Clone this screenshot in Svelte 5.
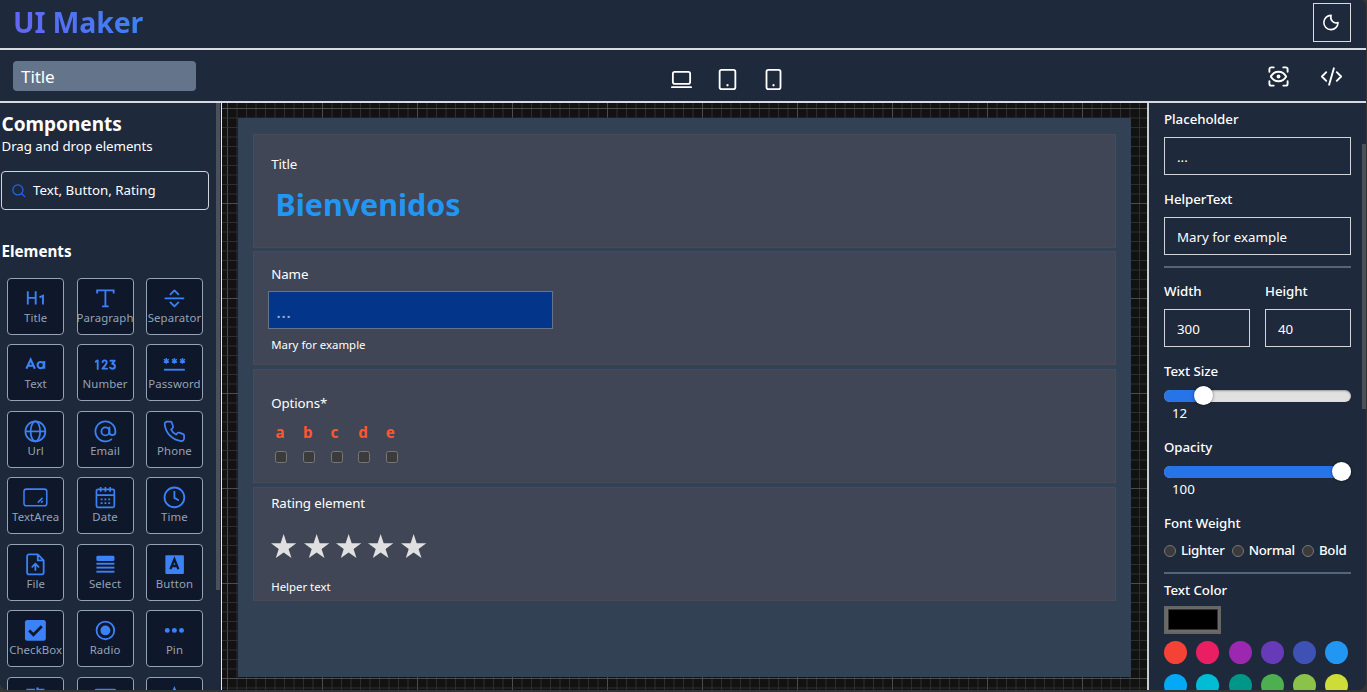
<script>
  const tiles = [
    ['Title', 'h1'], ['Paragraph', 'para'], ['Separator', 'sep'],
    ['Text', 'aa'], ['Number', 'num'], ['Password', 'pass'],
    ['Url', 'url'], ['Email', 'email'], ['Phone', 'phone'],
    ['TextArea', 'area'], ['Date', 'date'], ['Time', 'time'],
    ['File', 'file'], ['Select', 'select'], ['Button', 'button'],
    ['CheckBox', 'check'], ['Radio', 'radio'], ['Pin', 'pin'],
    ['', 'switch'], ['', 'slider'], ['', 'rating']
  ];

  const S = (d, w = 2) =>
    `<path d="${d}" fill="none" stroke="currentColor" stroke-width="${w}" stroke-linecap="round" stroke-linejoin="round"/>`;
  const F = (d) => `<path d="${d}" fill="currentColor" fill-rule="evenodd"/>`;
  const ast = (x) => `M${x} 5.200v6.200M${x - 2.700} 6.700l5.400 3.200M${x + 2.700} 6.700l-5.400 3.200`;

  const icons = {
    h1: `<path d="M4 4.500v14M12.300 4.500v14M4 11.500h8.300M16.300 11l3.700-1.800v9.300" fill="none" stroke="currentColor" stroke-width="2"/>`,
    para: `<path d="M3.300 6.800V3.500h17.400v3.300M12 3.500v17M8.500 20.500h7" fill="none" stroke="currentColor" stroke-width="1.900"/>`,
    sep: S('M2.500 12h19M7.800 7.800L12 3.600l4.200 4.200M7.800 16.200l4.200 4.200 4.200-4.200', 1.9),
    aa: `<path d="M2.500 16.600L7 6.800l4.500 9.800M4.300 13.400h5.400M21.300 8.400v8.200" fill="none" stroke="currentColor" stroke-width="2.200"/><circle cx="17.600" cy="12.700" r="3.300" fill="none" stroke="currentColor" stroke-width="2.200"/>`,
    num: S('M1.900 9.100l2-1.300v9M9 9.500c.3-2.400 4.600-2.200 4.400.4-.1 1.800-2.600 3.800-4.500 6.600h4.900M17.300 8.100h4.500l-2.700 3.300c4.300.3 3.500 5.200.3 5.200-1.200 0-2-.5-2.500-1.300', 2),
    pass: `<path d="${ast(3.500)}${ast(12)}${ast(20.500)}" fill="none" stroke="currentColor" stroke-width="1.400"/><path d="M1 17.600h22" stroke="currentColor" stroke-width="2"/>`,
    url: `<g fill="none" stroke="currentColor" stroke-width="1.800"><circle cx="12" cy="12" r="10.500"/><ellipse cx="12" cy="12" rx="5" ry="10.500"/><path d="M1.500 12h21"/></g>`,
    email: S('M16.200 7.800v5.400a3.200 3.200 0 0 0 6.300 0V12a10.500 10.500 0 1 0-4.200 8.400', 1.9) + '<circle cx="12" cy="12" r="4.200" fill="none" stroke="currentColor" stroke-width="1.900"/>',
    phone: S('M7.800 1.700H4.400a2.600 2.600 0 0 0-2.600 2.900c.9 9.200 8.200 16.700 17.500 17.600a2.600 2.600 0 0 0 2.900-2.600v-3.200a1.600 1.600 0 0 0-1-1.500l-4-1.600a1.600 1.600 0 0 0-1.700.3l-1.800 1.700c-2.200-1.100-4.100-3-5.100-5.200l1.700-1.800a1.600 1.600 0 0 0 .3-1.700L9.200 2.600a1.600 1.600 0 0 0-1.400-.9z', 1.8),
    area: `<g fill="none" stroke="currentColor"><rect x="0" y="3.300" width="24" height="17.600" rx="2.500" stroke-width="1.600"/><path d="M14.500 17.500l5-5M18 17.500l1.800-1.800" stroke-width="1.600"/></g>`,
    date: `<g fill="none" stroke="currentColor" stroke-width="1.800"><rect x="2.600" y="3.600" width="18.800" height="18.800" rx="1.500"/><path d="M3 9.500h18M7 1v5M12 1v5M17 1v5"/><path d="M7 14h2m2 0h2m2 0h2M7 18h2m2 0h2m2 0h2" stroke-width="1.800"/></g>`,
    time: `<g fill="none" stroke="currentColor" stroke-width="1.900" stroke-linecap="round"><circle cx="12" cy="12" r="10.400"/><path d="M12 6v6.500l4 2.200"/></g>`,
    file: S('M14.500 1.500H5.300A2 2 0 0 0 3.300 3.500v17a2 2 0 0 0 2 2h13.400a2 2 0 0 0 2-2V7.800zM14.500 1.500v6.300h6.200M12 18v-6.500M8.700 14.600l3.300-3.300 3.300 3.300', 1.9),
    select: '<g fill="currentColor"><rect x="2.500" y="3" width="19" height="5.500" rx="1.500"/><rect x="2.500" y="10.300" width="19" height="2"/><rect x="2.500" y="14.400" width="19" height="2"/><rect x="2.500" y="18.700" width="19" height="2"/></g>',
    button: '<rect x="2.500" y="2.500" width="19.500" height="19.500" rx="1" fill="currentColor"/><path d="M7.800 17L12 6.600 16.200 17M9.200 13.700h5.600" fill="none" stroke="#0f172a" stroke-width="2.400"/>',
    check: '<rect x="1" y="1" width="22" height="22" rx="2.500" fill="currentColor"/><path d="M5.500 12.200l4.400 4.400 8.800-9" fill="none" stroke="#0f172a" stroke-width="2.900"/>',
    radio: '<circle cx="12" cy="12" r="9.300" fill="none" stroke="currentColor" stroke-width="1.900"/><circle cx="12" cy="12" r="5.200" fill="currentColor"/>',
    pin: '<g fill="currentColor"><circle cx="4.500" cy="12" r="2.600"/><circle cx="12" cy="12" r="2.600"/><circle cx="19.500" cy="12" r="2.600"/></g>',
    switch: F('M2.500 3h9v4h-9zM13 1.500h2.500V8H13zM15.500 3h6v2.500h-6z'),
    slider: '<rect x="0" y="3" width="24" height="16" rx="3" fill="currentColor"/>',
    rating: F('M12 0l3.300 7.500 8 .7-6 5.500 1.800 8L12 18l-7.100 4.200 1.800-8-6-5.500 8-.7z')
  };

  const vlines = Array.from({ length: 98 }, (_, i) => ({ p: 5.5 + i * 9.5, major: i % 10 === 0 }));
  const hlines = Array.from({ length: 62 }, (_, i) => ({ p: 5.5 + i * 9.5, major: i % 10 === 0 }));
  const options = ['a', 'b', 'c', 'd', 'e'];
  const weights = ['Lighter', 'Normal', 'Bold'];
  const colors = ['#f44336', '#e91e63', '#9c27b0', '#673ab7', '#3f51b5', '#2196f3', '#03a9f4', '#00bcd4', '#009688', '#4caf50', '#8bc34a', '#cddc39'];
</script>

{#snippet range(label, value, pos)}
  <div class="label">{label}</div>
  <div class="range">
    <div class="fill" style="width:{pos}px"></div>
    <div class="thumb" style="left:{pos - 9.5}px"></div>
  </div>
  <div class="range-value">{value}</div>
{/snippet}

<div class="frame">
  <div class="app">
    <header>
      <h1>UI Maker</h1>
      <button class="theme" aria-label="Theme">
        <svg width="19" height="19" viewBox="0 0 24 24">{@html S('M11.500 3A7 7 0 0 0 20.300 12.100 9 9 0 1 1 11.500 3z', 2)}</svg>
      </button>
    </header>

    <div class="toolbar">
      <input class="doc-title" value="Title" aria-label="Title" />
      <div class="devices">
        <svg width="23" height="23" viewBox="0 0 24 24"><g fill="none" stroke="currentColor" stroke-width="1.900" stroke-linecap="round"><rect x="3" y="4" width="18" height="12.500" rx="2" /><path d="M2 20h20" /></g></svg>
        <svg width="23" height="23" viewBox="0 0 24 24"><rect x="3.800" y="2" width="16.400" height="20" rx="2" fill="none" stroke="currentColor" stroke-width="1.900" /><circle cx="12" cy="18" r="1.200" fill="currentColor" /></svg>
        <svg width="23" height="23" viewBox="0 0 24 24"><rect x="4.700" y="2" width="14.600" height="20" rx="2" fill="none" stroke="currentColor" stroke-width="1.900" /><circle cx="12" cy="18" r="1.200" fill="currentColor" /></svg>
      </div>
      <div class="tools">
        <svg width="23" height="23" viewBox="0 0 24 24">
          {@html S('M2.500 7V4.500a2 2 0 0 1 2-2H7M17 2.500h2.500a2 2 0 0 1 2 2V7M21.500 17v2.500a2 2 0 0 1-2 2H17M7 21.500H4.500a2 2 0 0 1-2-2V17M4 12C7.800 5.300 16.200 5.300 20 12 16.200 18.700 7.800 18.700 4 12z', 2)}
          <circle cx="12" cy="12" r="2" fill="currentColor" />
        </svg>
        <svg width="23" height="23" viewBox="0 0 24 24">{@html S('M6.500 7.500L2 12l4.500 4.500M17.500 7.500L22 12l-4.500 4.500M14.500 3.500l-5 17', 2)}</svg>
      </div>
    </div>

    <main>
      <aside class="left">
        <div class="left-body">
          <h2>Components</h2>
          <p>Drag and drop elements</p>
          <div class="search">
            <svg width="13.500" height="13.500" viewBox="0 0 24 24">{@html '<circle cx="10.500" cy="10.500" r="9" fill="none" stroke="currentColor" stroke-width="2.200"/>' + S('M17 17l5.500 5.500', 2.2)}</svg>
            <span>Text, Button, Rating</span>
          </div>
          <h3>Elements</h3>
          <div class="tiles">
            {#each tiles as [name, icon]}
              <div class="tile">
                <svg width="22.800" height="22.800" viewBox="0 0 24 24">{@html icons[icon]}</svg>
                {#if name}<span>{name}</span>{/if}
              </div>
            {/each}
          </div>
        </div>
        <div class="bar"></div>
      </aside>

      <section class="canvas">
        <svg class="grid" width="925" height="587">
          {#each vlines as l}<line x1={l.p} x2={l.p} y1="0" y2="587" class:major={l.major} />{/each}
          {#each hlines as l}<line y1={l.p} y2={l.p} x1="0" x2="925" class:major={l.major} />{/each}
        </svg>
        <div class="sheet">
          <div class="field">
            <div class="label">Title</div>
            <div class="big">Bienvenidos</div>
          </div>
          <div class="field">
            <div class="label">Name</div>
            <div class="name-input">...</div>
            <div class="help">Mary for example</div>
          </div>
          <div class="field opts">
            <div class="label">Options*</div>
            <div class="options">
              {#each options as o}
                <div class="option"><b>{o}</b><i></i></div>
              {/each}
            </div>
          </div>
          <div class="field rate">
            <div class="label">Rating element</div>
            <div class="stars">
              {#each options as _}
                <svg width="25.300" height="24.200" viewBox="0 0 100 95"><path d="M50 0l12 36h38L69.500 58.500 81 95 50 72.500 19 95l11.500-36.500L0 36h38z" fill="#e0e0e0" /></svg>
              {/each}
            </div>
            <div class="help">Helper text</div>
          </div>
        </div>
      </section>

      <aside class="right">
        <div class="right-body">
          <div class="label">Placeholder</div>
          <div class="box">...</div>
          <div class="label">HelperText</div>
          <div class="box">Mary for example</div>
          <hr />
          <div class="pair">
            <div><div class="label">Width</div><div class="box">300</div></div>
            <div><div class="label">Height</div><div class="box">40</div></div>
          </div>
          {@render range('Text Size', 12, 39)}
          {@render range('Opacity', 100, 177.5)}
          <div class="label">Font Weight</div>
          <div class="weights">
            {#each weights as w}<span><i></i>{w}</span>{/each}
          </div>
          <hr class="second" />
          <div class="label">Text Color</div>
          <div class="picker"><div></div></div>
          <div class="swatches">
            {#each colors as c}<span style="background:{c}"></span>{/each}
          </div>
        </div>
        <div class="bar"></div>
      </aside>
    </main>
  </div>
</div>

<style>
  :global(body) { margin: 0; overflow: hidden; background: #333; }
  .frame { width: 1367px; height: 692px; background: #333435; overflow: hidden; font: 13.3px/19px "Noto Sans", sans-serif; color: #fff; }
  .frame * { box-sizing: border-box; }
  .app { width: 1366px; height: 690px; display: flex; flex-direction: column; background: #1e293b; border-radius: 0 6px 8px 8px; overflow: hidden; }
  h1, h2, h3, p { margin: 0; }
  svg { display: block; flex: none; overflow: visible; }

  header { height: 50px; flex: none; display: flex; justify-content: space-between; align-items: flex-start; padding: 3px 15px 0 13px; border-bottom: 2px solid #d5dae3; }
  h1 { font-size: 28.500px; line-height: 38px; font-weight: 700; letter-spacing: -.15px; background: linear-gradient(90deg, #6366f1, #3b82f6); -webkit-background-clip: text; background-clip: text; color: transparent; }
  .theme { width: 38px; height: 39px; padding: 0 1px 0 0; display: grid; place-items: center; background: none; border: 1px solid #d8dbe0; color: #fff; border-radius: 0; }

  .toolbar { height: 53px; flex: none; display: flex; align-items: flex-start; padding: 10px 23px 0 13px; border-bottom: 2px solid #d5dae3; }
  .doc-title { width: 182.500px; height: 30px; margin-top: .5px; padding: 1.500px 8px 0; border: 0; border-radius: 4px; background: #64748b; color: #fff; font: 17.100px "Noto Sans", sans-serif; letter-spacing: -.1px; }
  .devices { display: flex; gap: 22.700px; padding-top: 8px; margin-left: 474.700px; }
  .tools { display: flex; gap: 30px; margin-left: auto; padding-top: 5px; }

  main { flex: 1; min-height: 0; display: flex; }
  .left { width: 222px; flex: none; display: flex; border-right: 1.500px solid #e5e7eb; overflow: hidden; }
  .left-body { width: 216px; flex: none; padding: 7.500px 0 0 1.500px; }
  .left .bar { width: 4px; height: 487px; background: #4b5158; }
  h2 { font-size: 19px; line-height: 26.500px; }
  p { letter-spacing: -.05px; }
  .search { width: 208px; height: 38.500px; margin-top: 15px; border: 1px solid #d1d5db; border-radius: 4px; display: flex; align-items: center; gap: 7.500px; padding-left: 10px; margin-left: -.5px; }
  .search span { padding-top: 1px; }
  .search svg { color: #2563eb; }
  h3 { font-size: 15.200px; line-height: 22px; margin-top: 30.500px; }
  .tiles { display: grid; grid-template-columns: repeat(3, 57px); column-gap: 12.400px; row-gap: 9.500px; margin: 15.500px 0 0 5.700px; }
  .tile { height: 57px; border: 1px solid #94a3b8; border-radius: 4px; background: #0f172a; display: flex; flex-direction: column; align-items: center; padding-top: 8px; color: #3b82f6; }
  .tile span { font-size: 11.400px; line-height: 15.200px; color: #94a3b8; white-space: nowrap; letter-spacing: .1px; padding-top: .5px; }

  .canvas { width: 925px; flex: none; position: relative; background: #121212; overflow: hidden; padding: 15.400px 0 0 15.500px; }
  .grid { position: absolute; left: 0; top: 0; }
  .grid line { stroke: #303030; stroke-width: .95; }
  .grid line.major { stroke: #505050; }
  .sheet { position: relative; width: 893.500px; height: 559px; background: #334155; padding: 15.500px; display: flex; flex-direction: column; gap: 3.600px; }
  .field { height: 114px; flex: none; background: #404655; border: 1px solid #4a4954; padding: 12.500px 0 0 17.200px; }
  .field:first-child { padding-top: 20px; }
  .field .label { letter-spacing: -.1px; }
  .big { font-size: 30.400px; line-height: 40px; font-weight: 700; color: #2196f3; margin: 11.400px 0 0 4.300px; }
  .name-input { width: 285.500px; height: 38px; margin: 7.400px 0 0 -3.700px; border: 1px solid #64748b; background: #03368b; color: #a3a9b5; padding: 8.700px 0 0 8px; font-size: 15px; font-weight: 600; line-height: 22px; letter-spacing: .8px; }
  .help { font-size: 11.400px; line-height: 16px; margin-top: 7.600px; }
  .opts { padding-top: 23.500px; }
  .options { display: flex; margin: 9.200px 0 0 4.200px; gap: 15.600px; }
  .option { width: 12px; }
  .option b { display: block; color: #ff5630; font-size: 15.200px; line-height: 21px; }
  .option i { display: block; width: 12px; height: 12px; margin-top: 8px; border: 1px solid #777; border-radius: 2.500px; background: #3b3b3b; }
  .rate { padding-top: 6px; }
  .stars { display: flex; gap: 7.100px; margin-top: 21px; }
  .rate .help { margin-top: 21.500px; }

  .right { width: 219px; flex: none; display: flex; border-left: 2px solid #c9ccd2; overflow: hidden; }
  .right-body { width: 213px; flex: none; padding: 6.500px 11px 0 15px; }
  .right .bar { width: 4px; height: 265px; margin-top: 41px; background: #4b5158; }
  .right .label { font-weight: 500; letter-spacing: -.05px; }
  .box { height: 38px; margin: 8.400px 0 15.100px; border: 1px solid #d1d5db; padding: 0 12px; line-height: 38px; }
  hr { height: 2px; border: 0; margin: -4px 0 13.500px; background: #56647a; }
  .pair { display: grid; grid-template-columns: 1fr 1fr; gap: 15px; }
  .range { height: 12px; border-radius: 6px; background: #e1e1e1; margin: 8.200px 0 2.800px; position: relative; box-shadow: inset 0 1px 2px #0005; }
  .fill { height: 12px; border-radius: 6px; background: #2773e8; }
  .thumb { position: absolute; top: -3.500px; width: 19px; height: 19px; border-radius: 50%; background: #fff; box-shadow: 0 0 3px #0008; }
  .range-value { padding-left: 8px; margin-bottom: 15px; }
  .weights { display: flex; gap: 7.200px; margin-top: 8px; font-weight: 500; white-space: nowrap; letter-spacing: -.3px; }
  .weights span { display: flex; align-items: center; gap: 5px; }
  .weights i { width: 12px; height: 12px; flex: none; border: 1px solid #777; border-radius: 50%; background: #3b3b3b; }
  hr.second { margin: 11.500px 0 7.500px; }
  .picker { width: 57px; height: 28px; margin-top: 5.500px; border: 2px solid #666; background: #6b6b6b; padding: 1.500px; }
  .picker div { height: 21px; background: #000; border: 1px solid #333; }
  .swatches { display: grid; grid-template-columns: repeat(6, 23px); gap: 9.300px; margin-top: 7.500px; }
  .swatches span { width: 23px; height: 23px; border-radius: 50%; }
</style>
